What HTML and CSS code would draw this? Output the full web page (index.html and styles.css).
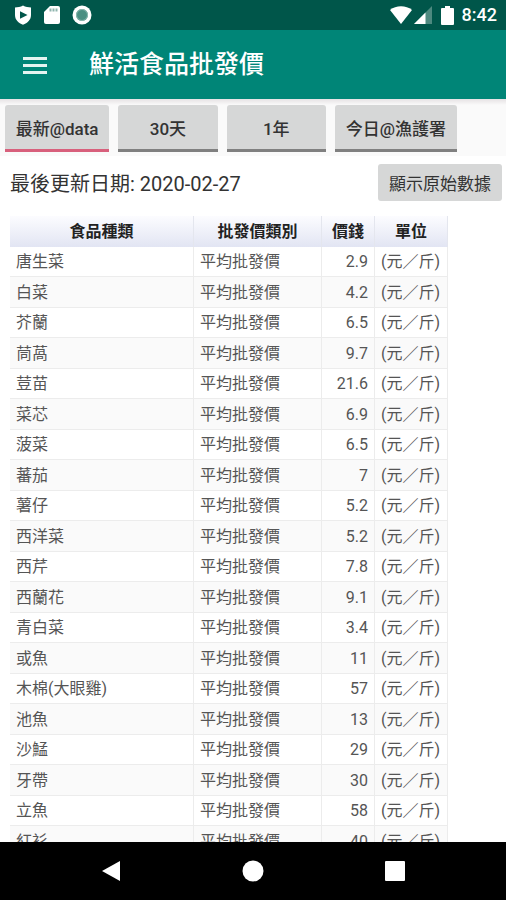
FILE: index.html
```
<!DOCTYPE html>
<html lang="zh-Hant">
<head>
    <meta charset="utf-8">
    <meta name="viewport" content="width=device-width, initial-scale=1">
    <title>鮮活食品批發價</title>
    <link rel="stylesheet" href="styles.css">
</head>
<body>
    <div class="statusbar">
        <svg class="icon" width="18" height="20" viewBox="0 0 18 20">
            <path fill="#fff" d="M9 0.5 C11.5 2 14.5 2.3 17 2.5 V10 C17 15 13.5 18 9 19.7 C4.5 18 1 15 1 10 V2.5 C3.5 2.3 6.5 2 9 .5z"/>
            <path fill="#00564a" d="M6 6.2 L13.5 10 L6 13.8z"/>
        </svg>
        <svg class="icon" width="16" height="20" viewBox="0 0 16 20">
            <path fill="#fff" d="M6 1 H14 Q16 1 16 3 V17 Q16 19 14 19 H2 Q0 19 0 17 V7z"/>
            <path fill="#8fb5ae" d="M5.5 3.5h2v3h-2zM8.5 3.5h2v3h-2zM11.5 3.5h2v3h-2z"/>
        </svg>
        <svg class="icon" width="20" height="20" viewBox="0 0 20 20">
            <circle cx="10" cy="10" r="9.5" fill="#fff"/>
            <circle cx="10" cy="10" r="6" fill="#4b8f82"/>
            <circle cx="10" cy="10" r="5.5" fill="none" stroke="#8ab8af"/>
        </svg>
        <span class="spacer"></span>
        <svg class="wifi" width="22" height="18" viewBox="0 0 22 18">
            <path fill="#fff" d="M0 4 C6 -1 16 -1 22 4 L11 18z"/>
        </svg>
        <svg class="signal" width="18" height="18" viewBox="0 0 18 18">
            <path fill="#4d897f" d="M18 0 V18 H0z"/>
            <path fill="#fff" d="M11.5 6.5 V18 H0z"/>
        </svg>
        <svg class="battery" width="13" height="19" viewBox="0 0 13 19">
            <path fill="#fff" d="M4 0 H9 V2 H12 Q13 2 13 3 V18 Q13 19 12 19 H1 Q0 19 0 18 V3 Q0 2 1 2 H4z"/>
        </svg>
        <span class="clock">8:42</span>
    </div>

    <header class="appbar">
        <button class="menu" aria-label="選單">
            <svg width="24" height="18" viewBox="0 0 24 18">
                <path fill="#e4f4f1" d="M0 1h24v3H0zM0 8h24v3H0zM0 15h24v3H0z"/>
            </svg>
        </button>
        <h1>鮮活食品批發價</h1>
    </header>

    <nav class="tabs">
        <button class="tab active">最新@data</button>
        <button class="tab">30天</button>
        <button class="tab">1年</button>
        <button class="tab wide">今日@漁護署</button>
    </nav>

    <main>
        <div class="info">
            <span class="updated">最後更新日期: 2020-02-27</span>
            <button class="raw">顯示原始數據</button>
        </div>
        <table class="prices">
            <thead>
                <tr><th class="name">食品種類</th><th class="type">批發價類別</th><th class="price">價錢</th><th>單位</th></tr>
            </thead>
            <tbody>
                <tr><td>唐生菜</td><td>平均批發價</td><td class="num">2.9</td><td>(元／斤)</td></tr>
                <tr><td>白菜</td><td>平均批發價</td><td class="num">4.2</td><td>(元／斤)</td></tr>
                <tr><td>芥蘭</td><td>平均批發價</td><td class="num">6.5</td><td>(元／斤)</td></tr>
                <tr><td>茼萵</td><td>平均批發價</td><td class="num">9.7</td><td>(元／斤)</td></tr>
                <tr><td>荳苗</td><td>平均批發價</td><td class="num">21.6</td><td>(元／斤)</td></tr>
                <tr><td>菜芯</td><td>平均批發價</td><td class="num">6.9</td><td>(元／斤)</td></tr>
                <tr><td>菠菜</td><td>平均批發價</td><td class="num">6.5</td><td>(元／斤)</td></tr>
                <tr><td>蕃茄</td><td>平均批發價</td><td class="num">7</td><td>(元／斤)</td></tr>
                <tr><td>薯仔</td><td>平均批發價</td><td class="num">5.2</td><td>(元／斤)</td></tr>
                <tr><td>西洋菜</td><td>平均批發價</td><td class="num">5.2</td><td>(元／斤)</td></tr>
                <tr><td>西芹</td><td>平均批發價</td><td class="num">7.8</td><td>(元／斤)</td></tr>
                <tr><td>西蘭花</td><td>平均批發價</td><td class="num">9.1</td><td>(元／斤)</td></tr>
                <tr><td>青白菜</td><td>平均批發價</td><td class="num">3.4</td><td>(元／斤)</td></tr>
                <tr><td>或魚</td><td>平均批發價</td><td class="num">11</td><td>(元／斤)</td></tr>
                <tr><td>木棉(大眼雞)</td><td>平均批發價</td><td class="num">57</td><td>(元／斤)</td></tr>
                <tr><td>池魚</td><td>平均批發價</td><td class="num">13</td><td>(元／斤)</td></tr>
                <tr><td>沙鯭</td><td>平均批發價</td><td class="num">29</td><td>(元／斤)</td></tr>
                <tr><td>牙帶</td><td>平均批發價</td><td class="num">30</td><td>(元／斤)</td></tr>
                <tr><td>立魚</td><td>平均批發價</td><td class="num">58</td><td>(元／斤)</td></tr>
                <tr><td>紅衫</td><td>平均批發價</td><td class="num">40</td><td>(元／斤)</td></tr>
            </tbody>
        </table>
    </main>

    <footer class="navbar">
        <button aria-label="返回">
            <svg width="20" height="22" viewBox="0 0 20 22"><path fill="#fff" d="M19 1 V21 L1 11z"/></svg>
        </button>
        <button aria-label="主畫面">
            <svg width="22" height="22" viewBox="0 0 22 22"><circle cx="11" cy="11" r="10.5" fill="#fff"/></svg>
        </button>
        <button aria-label="最近使用">
            <svg width="20" height="20" viewBox="0 0 20 20"><rect width="20" height="20" rx="1" fill="#fff"/></svg>
        </button>
    </footer>
</body>
</html>
```
FILE: styles.css
```
* {
    box-sizing: border-box;
}
body {
    margin: 0;
    height: 100vh;
    display: flex;
    flex-direction: column;
    background-color: #fff;
    color: #333;
    font-family: Roboto, "Noto Sans CJK TC", sans-serif;
    font-size: 16px;
}
button {
    border: 0;
    padding: 0;
    background: none;
    color: inherit;
    font-family: inherit;
}
svg {
    display: block;
}

.statusbar {
    flex: none;
    display: flex;
    align-items: center;
    height: 30px;
    padding: 0 9px 0 14px;
    background-color: #00564a;
    color: #fff;
}
.statusbar .icon {
    margin-right: 12px;
}
.spacer {
    flex: 1;
}
.signal {
    margin: 0 9px 0 2px;
}
.clock {
    margin-left: 8px;
    font-size: 18px;
    font-weight: 500;
    line-height: 32px;
}

.appbar {
    flex: none;
    display: flex;
    align-items: center;
    height: 69px;
    padding-left: 23px;
    background-color: #008577;
    color: #fff;
}
.appbar h1 {
    margin: 0 0 0 42px;
    font-size: 25px;
    font-weight: 500;
    line-height: 36px;
}

.tabs {
    flex: none;
    display: flex;
    gap: 9px;
    padding: 6px 49px 4px 5px;
    background: linear-gradient(#e6e2e4, #fafafa 6px);
}
.tab {
    flex: 100;
    height: 47px;
    border-bottom: 3px solid #808080;
    border-radius: 3px 3px 0 0;
    background-color: #d6d7d7;
    font-size: 17px;
    font-weight: 500;
    white-space: nowrap;
}
.tab.active {
    flex: 105;
    border-bottom-color: #d8607c;
}
.tab.wide {
    flex: 123;
}

main {
    flex: 1;
    min-height: 0;
    overflow: hidden;
    padding: 8px 4px 0 10px;
}
.info {
    display: flex;
    align-items: center;
    justify-content: space-between;
}
.updated {
    font-size: 20px;
}
.raw {
    height: 37px;
    padding: 0 11px;
    border-radius: 3px;
    background-color: #d6d7d7;
    font-size: 17px;
}

.prices {
    width: 89%;
    margin-top: 15px;
    border-collapse: separate;
    border-spacing: 0;
    table-layout: fixed;
    color: #555;
}
.prices th {
    height: 31px;
    padding: 0;
    border-right: 1px solid #e4e6ee;
    background: linear-gradient(#fcfcff, #e2e5f3);
    color: #222;
    line-height: 20px;
}
.prices td {
    height: 30px;
    padding: 1px 6px 0;
    border-right: 1px solid #ececec;
    border-bottom: 1px solid #ececec;
    line-height: 22px;
    white-space: nowrap;
}
.prices tr:nth-child(even) td {
    height: 31px;
    background-color: #fafafa;
}
.prices .name {
    width: 184px;
}
.prices .type {
    width: 128px;
}
.prices .price {
    width: 53px;
}
.prices .num {
    text-align: right;
}

.navbar {
    flex: none;
    display: flex;
    justify-content: center;
    height: 58px;
    background-color: #000;
}
.navbar button {
    flex: 0 1 142px;
    display: flex;
    align-items: center;
    justify-content: center;
}
```
